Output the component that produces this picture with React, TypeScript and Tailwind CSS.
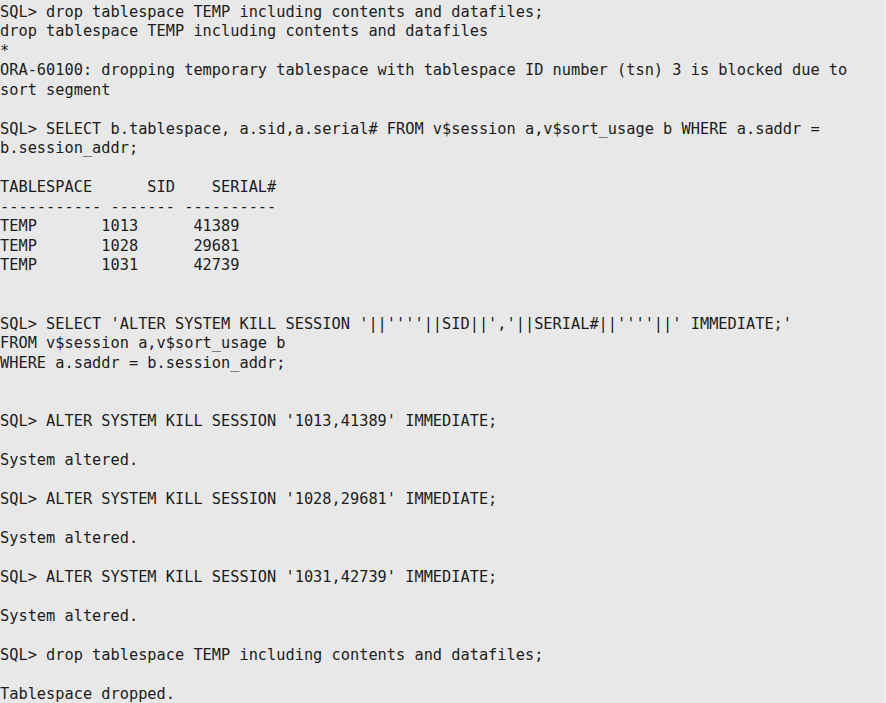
import React from 'react';

// Terminal output from a SQL*Plus session, one entry per printed line
const lines: string[] = [
  'SQL> drop tablespace TEMP including contents and datafiles;',
  'drop tablespace TEMP including contents and datafiles',
  '*',
  'ORA-60100: dropping temporary tablespace with tablespace ID number (tsn) 3 is blocked due to',
  'sort segment',
  '',
  'SQL> SELECT b.tablespace, a.sid,a.serial# FROM v$session a,v$sort_usage b WHERE a.saddr =',
  'b.session_addr;',
  '',
  'TABLESPACE      SID    SERIAL#',
  '----------- ------- ----------',
  'TEMP       1013      41389',
  'TEMP       1028      29681',
  'TEMP       1031      42739',
  '',
  '',
  "SQL> SELECT 'ALTER SYSTEM KILL SESSION '||''''||SID||','||SERIAL#||''''||' IMMEDIATE;'",
  'FROM v$session a,v$sort_usage b',
  'WHERE a.saddr = b.session_addr;',
  '',
  '',
  "SQL> ALTER SYSTEM KILL SESSION '1013,41389' IMMEDIATE;",
  '',
  'System altered.',
  '',
  "SQL> ALTER SYSTEM KILL SESSION '1028,29681' IMMEDIATE;",
  '',
  'System altered.',
  '',
  "SQL> ALTER SYSTEM KILL SESSION '1031,42739' IMMEDIATE;",
  '',
  'System altered.',
  '',
  'SQL> drop tablespace TEMP including contents and datafiles;',
  '',
  'Tablespace dropped.',
];

const App: React.FC = () => {
  return (
    <div className="min-h-screen w-full bg-[#e8e8e8] border-r border-[#f3f3f3] overflow-hidden">
      <pre className="pt-[2.5px] m-0 font-['DejaVu_Sans_Mono',monospace] text-[15.3px] leading-[19.5px] text-[#1c1c1c] whitespace-pre">
        {lines.map((line, i) => (
          <div key={i} className="h-[19.5px]">
            {line}
          </div>
        ))}
      </pre>
    </div>
  );
};

export default App;
